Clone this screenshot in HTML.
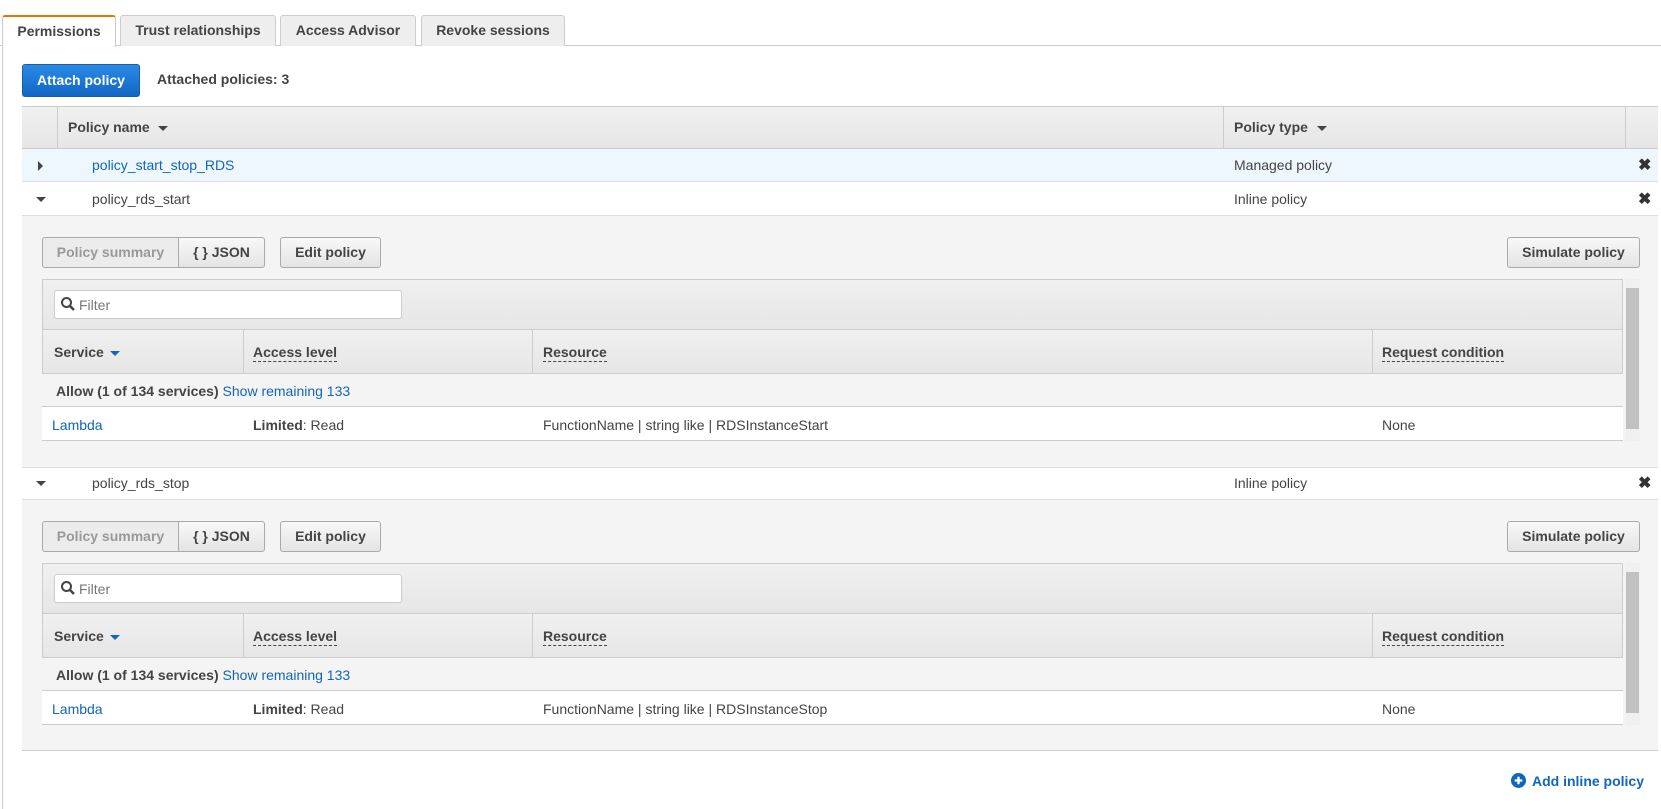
<!DOCTYPE html>
<html><head><meta charset="utf-8"><style>
*{box-sizing:border-box;margin:0;padding:0}
body{width:1661px;height:809px;background:#fff;font-family:"Liberation Sans",Arial,sans-serif;font-size:14px;color:#444;position:relative;overflow:hidden}
.a{position:absolute}
.tab{position:absolute;top:15px;height:31px;border:1px solid #ccc;border-bottom:none;background:#eee;border-radius:3px 3px 0 0;font-weight:bold;font-size:14px;line-height:28px;text-align:center;color:#444}
.link{color:#1166bb}
.b{font-weight:bold}
.btn{position:absolute;height:31px;border:1px solid #aaa;border-radius:3px;background:linear-gradient(#f8f8f8,#e4e4e4);font-weight:bold;line-height:29px;text-align:center;color:#444}
.hdr{background:linear-gradient(#f0f0f0,#e6e6e6)}
.dash{border-bottom:1px dashed #444;padding-bottom:1px}
.tri-d{width:0;height:0;border-left:5px solid transparent;border-right:5px solid transparent;border-top:5px solid #444}
.tri-r{width:0;height:0;border-top:5px solid transparent;border-bottom:5px solid transparent;border-left:5px solid #444}
.x{position:absolute;left:1638px;font-size:16px;font-weight:bold;color:#333}
</style></head><body>
<div class="a" style="left:0;top:45px;width:1661px;height:1px;background:#ccc"></div>
<div class="a" style="left:2px;top:45px;width:1px;height:764px;background:#ccc"></div>
<div class="tab" style="left:2px;width:114px;background:#fff;border-top:2px solid #e77600;height:32px">Permissions</div>
<div class="tab" style="left:120px;width:156px">Trust relationships</div>
<div class="tab" style="left:280px;width:136px">Access Advisor</div>
<div class="tab" style="left:421px;width:144px">Revoke sessions</div>

<div class="a" style="left:22px;top:64px;width:118px;height:33px;border:1px solid #1a5fa0;border-radius:3px;background:linear-gradient(#2a8ae6,#1266c4);color:#fff;font-weight:bold;text-align:center;line-height:31px">Attach policy</div>
<div class="a b" style="left:157px;top:71px">Attached policies: 3</div>

<!-- main table -->
<div class="a hdr" style="left:22px;top:106px;width:1636px;height:43px;border-top:1px solid #ccc;border-bottom:1px solid #ccc"></div>
<div class="a" style="left:57px;top:107px;width:1px;height:41px;background:#ccc"></div>
<div class="a" style="left:1223px;top:107px;width:1px;height:41px;background:#ccc"></div>
<div class="a" style="left:1625px;top:107px;width:1px;height:41px;background:#ccc"></div>
<div class="a b" style="left:68px;top:119px">Policy name</div><div class="a tri-d" style="left:158px;top:126px"></div>
<div class="a b" style="left:1234px;top:119px">Policy type</div><div class="a tri-d" style="left:1317px;top:126px"></div>

<div class="a" style="left:22px;top:149px;width:1636px;height:33px;background:#eff7fe;border-bottom:1px solid #ddd"></div>
<div class="a tri-r" style="left:38px;top:161px"></div>
<div class="a link" style="left:92px;top:157px">policy_start_stop_RDS</div>
<div class="a" style="left:1234px;top:157px">Managed policy</div>
<div class="x" style="top:155px">✖</div>

<div class="a" style="left:22px;top:182px;width:1636px;height:34px;background:#fff;border-bottom:1px solid #ddd"></div>
<div class="a tri-d" style="left:36px;top:197px"></div>
<div class="a" style="left:92px;top:191px">policy_rds_start</div>
<div class="a" style="left:1234px;top:191px">Inline policy</div>
<div class="x" style="top:189px">✖</div>

<div class="a" style="left:22px;top:467px;width:1636px;height:33px;background:#fff;border-top:1px solid #ddd;border-bottom:1px solid #ddd"></div>
<div class="a tri-d" style="left:36px;top:481px"></div>
<div class="a" style="left:92px;top:475px">policy_rds_stop</div>
<div class="a" style="left:1234px;top:475px">Inline policy</div>
<div class="x" style="top:473px">✖</div>

<!-- panels -->
<div class="a" style="left:22px;top:216px;width:1636px;height:251px;background:#f4f4f4"></div>
<div class="a" style="left:22px;top:500px;width:1636px;height:251px;background:#f4f4f4;border-bottom:1px solid #ccc"></div>

<div id="p1" class="a" style="left:0;top:0;width:1661px;height:300px">
</div>

<!-- Panel 1 contents -->
<div class="btn" style="left:42px;top:237px;width:137px;color:#999;background:#ececec;border-radius:3px 0 0 3px">Policy summary</div>
<div class="btn" style="left:178px;top:237px;width:87px;border-radius:0 3px 3px 0">{ } JSON</div>
<div class="btn" style="left:280px;top:237px;width:101px">Edit policy</div>
<div class="btn" style="left:1507px;top:237px;width:133px">Simulate policy</div>
<div class="a hdr" style="left:42px;top:279px;width:1581px;height:51px;border:1px solid #ccc"></div>
<div class="a" style="left:54px;top:290px;width:348px;height:29px;background:#fff;border:1px solid #ccc;border-radius:3px"></div>
<svg class="a" style="left:60px;top:296px" width="16" height="16" viewBox="0 0 16 16"><circle cx="6.5" cy="6.5" r="4.5" fill="none" stroke="#444" stroke-width="2"/><path d="M10 10l4 4" stroke="#444" stroke-width="2.5"/></svg>
<div class="a" style="left:79px;top:297px;color:#777">Filter</div>
<div class="a hdr" style="left:42px;top:330px;width:1581px;height:44px;border:1px solid #ccc;border-top:none"></div>
<div class="a" style="left:243px;top:330px;width:1px;height:43px;background:#ccc"></div>
<div class="a" style="left:532px;top:330px;width:1px;height:43px;background:#ccc"></div>
<div class="a" style="left:1372px;top:330px;width:1px;height:43px;background:#ccc"></div>
<div class="a b" style="left:54px;top:344px">Service</div><div class="a tri-d" style="left:110px;top:351px;border-top-color:#1166bb"></div>
<div class="a b" style="left:253px;top:344px"><span class="dash">Access level</span></div>
<div class="a b" style="left:543px;top:344px"><span class="dash">Resource</span></div>
<div class="a b" style="left:1382px;top:344px"><span class="dash">Request condition</span></div>
<div class="a" style="left:42px;top:373px;width:1581px;height:34px;border-bottom:1px solid #ccc"></div>
<div class="a" style="left:56px;top:383px"><b>Allow (1 of 134 services)</b> <span class="link">Show remaining 133</span></div>
<div class="a" style="left:42px;top:407px;width:1581px;height:34px;background:#fff;border-bottom:1px solid #ccc"></div>
<div class="a link" style="left:52px;top:417px">Lambda</div>
<div class="a" style="left:253px;top:417px"><b>Limited</b>: Read</div>
<div class="a" style="left:543px;top:417px">FunctionName | string like | RDSInstanceStart</div>
<div class="a" style="left:1382px;top:417px">None</div>
<div class="a" style="left:1625px;top:279px;width:15px;height:162px;background:#f0f0f0"></div>
<div class="a" style="left:1626px;top:288px;width:13px;height:141px;background:#c1c1c1"></div>

<!-- Panel 2 contents -->
<div class="btn" style="left:42px;top:521px;width:137px;color:#999;background:#ececec;border-radius:3px 0 0 3px">Policy summary</div>
<div class="btn" style="left:178px;top:521px;width:87px;border-radius:0 3px 3px 0">{ } JSON</div>
<div class="btn" style="left:280px;top:521px;width:101px">Edit policy</div>
<div class="btn" style="left:1507px;top:521px;width:133px">Simulate policy</div>
<div class="a hdr" style="left:42px;top:563px;width:1581px;height:51px;border:1px solid #ccc"></div>
<div class="a" style="left:54px;top:574px;width:348px;height:29px;background:#fff;border:1px solid #ccc;border-radius:3px"></div>
<svg class="a" style="left:60px;top:580px" width="16" height="16" viewBox="0 0 16 16"><circle cx="6.5" cy="6.5" r="4.5" fill="none" stroke="#444" stroke-width="2"/><path d="M10 10l4 4" stroke="#444" stroke-width="2.5"/></svg>
<div class="a" style="left:79px;top:581px;color:#777">Filter</div>
<div class="a hdr" style="left:42px;top:614px;width:1581px;height:44px;border:1px solid #ccc;border-top:none"></div>
<div class="a" style="left:243px;top:614px;width:1px;height:43px;background:#ccc"></div>
<div class="a" style="left:532px;top:614px;width:1px;height:43px;background:#ccc"></div>
<div class="a" style="left:1372px;top:614px;width:1px;height:43px;background:#ccc"></div>
<div class="a b" style="left:54px;top:628px">Service</div><div class="a tri-d" style="left:110px;top:635px;border-top-color:#1166bb"></div>
<div class="a b" style="left:253px;top:628px"><span class="dash">Access level</span></div>
<div class="a b" style="left:543px;top:628px"><span class="dash">Resource</span></div>
<div class="a b" style="left:1382px;top:628px"><span class="dash">Request condition</span></div>
<div class="a" style="left:42px;top:657px;width:1581px;height:34px;border-bottom:1px solid #ccc"></div>
<div class="a" style="left:56px;top:667px"><b>Allow (1 of 134 services)</b> <span class="link">Show remaining 133</span></div>
<div class="a" style="left:42px;top:691px;width:1581px;height:34px;background:#fff;border-bottom:1px solid #ccc"></div>
<div class="a link" style="left:52px;top:701px">Lambda</div>
<div class="a" style="left:253px;top:701px"><b>Limited</b>: Read</div>
<div class="a" style="left:543px;top:701px">FunctionName | string like | RDSInstanceStop</div>
<div class="a" style="left:1382px;top:701px">None</div>
<div class="a" style="left:1625px;top:563px;width:15px;height:162px;background:#f0f0f0"></div>
<div class="a" style="left:1626px;top:572px;width:13px;height:141px;background:#c1c1c1"></div>

<!-- add inline -->
<svg class="a" style="left:1511px;top:773px" width="15" height="15" viewBox="0 0 16 16"><circle cx="8" cy="8" r="8" fill="#1166bb"/><path d="M8 4v8M4 8h8" stroke="#fff" stroke-width="2.5"/></svg>
<div class="a b link" style="left:1532px;top:773px">Add inline policy</div>
</body></html>
